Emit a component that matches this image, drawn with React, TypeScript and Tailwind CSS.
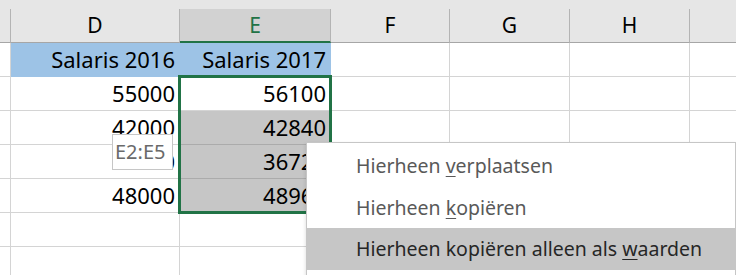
import React from "react";

const cols = [11, 169, 151, 119, 120, 120, 46];
const letters = ["", "D", "E", "F", "G", "H", ""];

type Row = { d?: string; e?: string; kind?: "blue" | "active" | "sel" | "plain" };

const rows: Row[] = [
  { d: "Salaris 2016", e: "Salaris 2017", kind: "blue" },
  { d: "55000", e: "56100", kind: "active" },
  { d: "42000", e: "42840", kind: "sel" },
  { d: "36000", e: "36720", kind: "sel" },
  { d: "48000", e: "48960", kind: "sel" },
  { kind: "plain" },
  { kind: "plain" },
];

function Cell({ w, className, children }: { w: number; className: string; children?: React.ReactNode }) {
  return (
    <div style={{ width: w }} className={`h-[34px] shrink-0 flex items-center justify-end pr-[4px] pb-[2px] border-r border-b ${className}`}>
      {children}
    </div>
  );
}

export default function App() {
  return (
    <div className="relative w-[736px] h-[275px] overflow-hidden bg-white text-[22px] text-black font-['Noto_Sans',sans-serif] leading-none">
      {/* column headers */}
      <div className="h-[9px] bg-[#e6e6e6]" />
      <div className="flex text-[21px]">
        {cols.map((w, i) => (
          <div
            key={i}
            style={{ width: w }}
            className={
              i === 2
                ? "h-[34px] shrink-0 flex items-center justify-center bg-[#d2d2d2] text-[#217346] border-r border-r-[#b4b4b4] border-b-2 border-b-[#217346]"
                : "h-[34px] shrink-0 flex items-center justify-center bg-[#e6e6e6] border-r border-r-[#b4b4b4] border-b border-b-[#a6a6a6] last:border-r-0"
            }
          >
            {letters[i]}
          </div>
        ))}
      </div>

      {/* cells */}
      {rows.map((r, ri) => (
        <div key={ri} className="flex">
          <Cell w={cols[0]} className="border-[#d4d4d4]" />
          <Cell w={cols[1]} className={r.kind === "blue" ? "bg-[#9dc3e6] border-[#9dc3e6]" : "border-[#d4d4d4]"}>
            {r.d}
          </Cell>
          <Cell
            w={cols[2]}
            className={
              r.kind === "blue"
                ? "bg-[#9dc3e6] border-[#9dc3e6]"
                : r.kind === "sel"
                ? "bg-[#c6c6c6] border-[#ababab]"
                : "border-[#d4d4d4]"
            }
          >
            {r.e}
          </Cell>
          {cols.slice(3).map((w, ci) => (
            <Cell key={ci} w={w} className="border-[#d4d4d4] last:border-r-0" />
          ))}
        </div>
      ))}

      {/* selection outline */}
      <div className="absolute left-[178px] top-[75px] w-[154px] h-[139px] border-[3px] border-[#217346]" />

      {/* range tooltip */}
      <div className="absolute left-[112px] top-[134px] w-[61px] h-[36px] bg-white border border-[#c6c6c6] flex items-center pl-[2px] text-[20px] text-[#6a6a6a]">
        E2:E5
      </div>

      {/* context menu */}
      <div className="absolute left-[306px] top-[142px] right-0 h-[150px] bg-white border border-[#c6c6c6] shadow-[0_2px_4px_rgba(0,0,0,0.15)] pt-[2px] text-[19.5px] text-[#595959]">
        <div className="h-[42px] flex items-center pl-[49px] whitespace-pre">
          Hierheen <span className="underline underline-offset-[3px] decoration-1">v</span>erplaatsen
        </div>
        <div className="h-[41px] flex items-center pl-[49px] whitespace-pre">
          Hierheen <span className="underline underline-offset-[3px] decoration-1">k</span>opiëren
        </div>
        <div className="h-[42px] flex items-center pl-[49px] whitespace-pre bg-[#c6c6c6] text-[#262626]">
          Hierheen kopiëren alleen als <span className="underline underline-offset-[3px] decoration-1">w</span>aarden
        </div>
      </div>
    </div>
  );
}
